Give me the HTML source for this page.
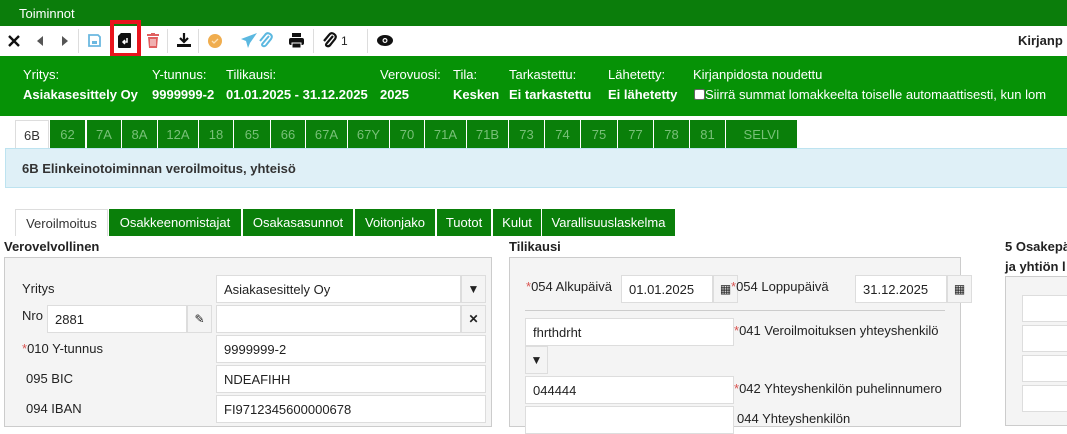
<!DOCTYPE html>
<html><head><meta charset="utf-8"><style>
*{box-sizing:border-box;margin:0;padding:0}
body{width:1067px;height:420px;overflow:hidden;background:#fff;font-family:"Liberation Sans",sans-serif;font-size:13px;color:#222;position:relative}
.a{position:absolute}
.top{left:0;top:0;width:1067px;height:26px;background:#0b7d0b;color:#fff;padding:6px 0 0 19px;font-size:13px}
.tb{top:27px;height:28px;left:0;width:1067px;background:#fff}
.sep{top:29px;width:1px;height:24px;background:#ddd}
.band{left:0;top:56px;width:1067px;height:60px;background:#069206;color:#fff}
.band .l{top:11px}.band .v{top:31px;font-weight:bold}
.tab{top:120px;height:28px;background:#0a7f0a;color:#78c078;text-align:center;padding-top:7px;font-size:13px}
.info{left:5px;top:148px;width:1070px;height:40px;background:#dff0f7;border:1px solid #bde3f0;padding:12px 0 0 16px;font-weight:bold;font-size:13px;color:#333}
.st{top:209px;height:27px;background:#0a7f0a;color:#fff;text-align:center;padding-top:6px}
.h{font-weight:bold;top:239px;font-size:13px;white-space:nowrap}
.panel{background:#f4f4f4;border:1px solid #ccc}
.inp{background:#fff;border:1px solid #ddd;height:28px;padding:6px 0 0 7px;font-size:13px}
.btn{background:#f4f4f4;border:1px solid #ddd;height:28px;width:25px;text-align:center;padding-top:6px;font-size:12px}
.lab{font-size:13px}
.r{color:#d9534f}
svg{position:absolute}
</style></head><body>
<div class="a top">Toiminnot</div>
<div class="a tb"></div>
<svg style="left:8px;top:35px" width="12" height="12"><path d="M1 1L11 11M11 1L1 11" stroke="#111" stroke-width="2.4"/></svg>
<svg style="left:37px;top:36px" width="7" height="10"><path d="M6 0L0 5L6 10Z" fill="#555"/></svg>
<svg style="left:62px;top:36px" width="7" height="10"><path d="M0 0L6 5L0 10Z" fill="#555"/></svg>
<div class="a sep" style="left:78px"></div>
<svg style="left:88px;top:34px" width="13" height="13"><path d="M1 1H10L12 3V12H1Z" fill="none" stroke="#6bb8e0" stroke-width="1.8"/><rect x="4" y="7" width="5" height="3" fill="#6bb8e0"/></svg>
<div class="a" style="left:110px;top:20px;width:31px;height:37px;border:4px solid #e8141c"></div>
<svg style="left:118px;top:33px" width="13" height="15"><path d="M3 0H12Q13 0 13 1V14Q13 15 12 15H1Q0 15 0 14V3Z" fill="#111"/><path d="M9 5V9H5M7 7L5 9L7 11" stroke="#fff" stroke-width="1.5" fill="none"/></svg>
<svg style="left:147px;top:33px" width="12" height="15"><rect x="0" y="1" width="12" height="2" fill="#e06060"/><rect x="4" y="0" width="4" height="2" fill="#e06060"/><path d="M1 4H11L10 15H2Z" fill="#e06060"/><path d="M4 6V13M6 6V13M8 6V13" stroke="#fff" stroke-width="1"/></svg>
<div class="a sep" style="left:167px"></div>
<svg style="left:177px;top:33px" width="14" height="14"><path d="M7 0V8M3 5L7 9L11 5" stroke="#111" stroke-width="2.2" fill="none"/><rect x="0" y="11" width="14" height="3" fill="#111"/></svg>
<div class="a sep" style="left:198px"></div>
<svg style="left:208px;top:34px" width="14" height="14"><circle cx="7" cy="7" r="7" fill="#f0ad4e"/><path d="M4 7L6 9L10 5" stroke="#fde3b8" stroke-width="1.3" fill="none"/></svg>
<svg style="left:241px;top:33px" width="16" height="15"><path d="M16 0L0 6L5 8L7 15L9 10Z" fill="#5bb8e0"/></svg>
<svg style="left:257px;top:32px" width="16" height="17"><path d="M12 4L6 11Q4 13 6 14Q8 15 10 12L14 7Q16 4 13 2Q10 0 8 3L3 9" stroke="#5bb8e0" stroke-width="2" fill="none"/></svg>
<svg style="left:289px;top:33px" width="15" height="15"><rect x="3" y="0" width="9" height="4" fill="#111"/><rect x="0" y="5" width="15" height="7" rx="2" fill="#111"/><rect x="3" y="10" width="9" height="5" fill="#111" stroke="#fff" stroke-width="1"/></svg>
<div class="a sep" style="left:313px"></div>
<svg style="left:323px;top:32px" width="14" height="17"><path d="M10 4L4 11Q2 13 4 14Q6 15 8 12L12 7Q14 4 11 2Q8 0 6 3L1 9" stroke="#111" stroke-width="2.2" fill="none"/></svg>
<div class="a" style="left:341px;top:34px;font-size:12px">1</div>
<div class="a sep" style="left:367px"></div>
<svg style="left:377px;top:35px" width="16" height="11"><ellipse cx="8" cy="5.5" rx="8" ry="5.5" fill="#111"/><circle cx="8" cy="5.5" r="2.5" fill="#fff"/><circle cx="8" cy="5.5" r="1.3" fill="#111"/></svg>
<div class="a" style="left:1018px;top:33px;font-weight:bold">Kirjanp</div>

<div class="a band">
<div class="a l" style="left:23px">Yritys:</div><div class="a v" style="left:23px">Asiakasesittely Oy</div>
<div class="a l" style="left:152px">Y-tunnus:</div><div class="a v" style="left:152px">9999999-2</div>
<div class="a l" style="left:226px">Tilikausi:</div><div class="a v" style="left:226px">01.01.2025 - 31.12.2025</div>
<div class="a l" style="left:380px">Verovuosi:</div><div class="a v" style="left:380px">2025</div>
<div class="a l" style="left:453px">Tila:</div><div class="a v" style="left:453px">Kesken</div>
<div class="a l" style="left:509px">Tarkastettu:</div><div class="a v" style="left:509px">Ei tarkastettu</div>
<div class="a l" style="left:608px">Lähetetty:</div><div class="a v" style="left:608px">Ei lähetetty</div>
<div class="a l" style="left:693px">Kirjanpidosta noudettu</div>
<div class="a" style="left:694px;top:31px;white-space:nowrap"><span style="display:inline-block;width:11px;height:11px;background:#fff;border:1px solid #666;border-radius:2px;vertical-align:-1px"></span>Siirrä summat lomakkeelta toiselle automaattisesti, kun lom</div>
</div>

<div class="a tab" style="left:15px;width:34px;background:#fff;color:#333;border:1px solid #ddd;border-bottom:none">6B</div>
<div class="a tab" style="left:50px;width:35px">62</div>
<div class="a tab" style="left:87px;width:34px">7A</div>
<div class="a tab" style="left:122px;width:35px">8A</div>
<div class="a tab" style="left:158px;width:40px">12A</div>
<div class="a tab" style="left:199px;width:34px">18</div>
<div class="a tab" style="left:234px;width:36px">65</div>
<div class="a tab" style="left:271px;width:34px">66</div>
<div class="a tab" style="left:306px;width:41px">67A</div>
<div class="a tab" style="left:348px;width:41px">67Y</div>
<div class="a tab" style="left:390px;width:34px">70</div>
<div class="a tab" style="left:425px;width:41px">71A</div>
<div class="a tab" style="left:467px;width:41px">71B</div>
<div class="a tab" style="left:509px;width:35px">73</div>
<div class="a tab" style="left:545px;width:35px">74</div>
<div class="a tab" style="left:581px;width:36px">75</div>
<div class="a tab" style="left:618px;width:35px">77</div>
<div class="a tab" style="left:654px;width:35px">78</div>
<div class="a tab" style="left:690px;width:35px">81</div>
<div class="a tab" style="left:726px;width:71px">SELVI</div>
<div class="a info">6B Elinkeinotoiminnan veroilmoitus, yhteisö</div>

<div class="a st" style="left:15px;width:93px;background:#fff;color:#333;border:1px solid #ddd;border-bottom:none">Veroilmoitus</div>
<div class="a st" style="left:109px;width:132px">Osakkeenomistajat</div>
<div class="a st" style="left:243px;width:110px">Osakasasunnot</div>
<div class="a st" style="left:355px;width:80px">Voitonjako</div>
<div class="a st" style="left:437px;width:54px">Tuotot</div>
<div class="a st" style="left:493px;width:48px">Kulut</div>
<div class="a st" style="left:542px;width:133px">Varallisuuslaskelma</div>

<div class="a h" style="left:4px">Verovelvollinen</div>
<div class="a h" style="left:509px">Tilikausi</div>
<div class="a h" style="left:1005px">5 Osakepä</div>
<div class="a h" style="left:1005px;top:259px">ja yhtiön l</div>

<div class="a panel" style="left:4px;top:257px;width:488px;height:170px"></div>
<div class="a lab" style="left:22px;top:281px">Yritys</div>
<div class="a inp" style="left:216px;top:275px;width:245px">Asiakasesittely Oy</div>
<div class="a btn" style="left:461px;top:275px">▼</div>
<div class="a lab" style="left:22px;top:308px">Nro</div>
<div class="a inp" style="left:47px;top:305px;width:140px">2881</div>
<div class="a btn" style="left:187px;top:305px">✎</div>
<div class="a inp" style="left:216px;top:305px;width:245px"></div>
<div class="a btn" style="left:461px;top:305px;font-weight:bold">✕</div>
<div class="a lab" style="left:22px;top:341px"><span class="r">*</span>010 Y-tunnus</div>
<div class="a inp" style="left:216px;top:335px;width:270px">9999999-2</div>
<div class="a lab" style="left:26px;top:371px">095 BIC</div>
<div class="a inp" style="left:216px;top:365px;width:270px">NDEAFIHH</div>
<div class="a lab" style="left:26px;top:401px">094 IBAN</div>
<div class="a inp" style="left:216px;top:395px;width:270px">FI9712345600000678</div>

<div class="a panel" style="left:509px;top:257px;width:452px;height:170px"></div>
<div class="a lab" style="left:526px;top:279px"><span class="r">*</span>054 Alkupäivä</div>
<div class="a inp" style="left:621px;top:275px;width:92px">01.01.2025</div>
<div class="a btn" style="left:713px;top:275px">▦</div>
<div class="a lab" style="left:731px;top:279px"><span class="r">*</span>054 Loppupäivä</div>
<div class="a inp" style="left:855px;top:275px;width:92px">31.12.2025</div>
<div class="a btn" style="left:947px;top:275px">▦</div>
<div class="a" style="left:525px;top:310px;width:420px;height:1px;background:#ccc"></div>
<div class="a inp" style="left:525px;top:318px;width:209px">fhrthdrht</div>
<div class="a lab" style="left:734px;top:323px"><span class="r">*</span>041 Veroilmoituksen yhteyshenkilö</div>
<div class="a btn" style="left:525px;top:346px;width:23px">▼</div>
<div class="a inp" style="left:525px;top:376px;width:209px">044444</div>
<div class="a lab" style="left:734px;top:381px"><span class="r">*</span>042 Yhteyshenkilön puhelinnumero</div>
<div class="a inp" style="left:525px;top:406px;width:209px"></div>
<div class="a lab" style="left:737px;top:411px">044 Yhteyshenkilön</div>

<div class="a" style="left:1005px;top:276px;width:70px;height:150px;background:#f4f4f4;border:1px solid #ccc"></div>
<div class="a" style="left:1022px;top:295px;width:50px;height:27px;background:#fff;border:1px solid #ddd"></div>
<div class="a" style="left:1022px;top:325px;width:50px;height:27px;background:#fff;border:1px solid #ddd"></div>
<div class="a" style="left:1022px;top:355px;width:50px;height:27px;background:#fff;border:1px solid #ddd"></div>
<div class="a" style="left:1022px;top:385px;width:50px;height:27px;background:#fff;border:1px solid #ddd"></div>
</body></html>
